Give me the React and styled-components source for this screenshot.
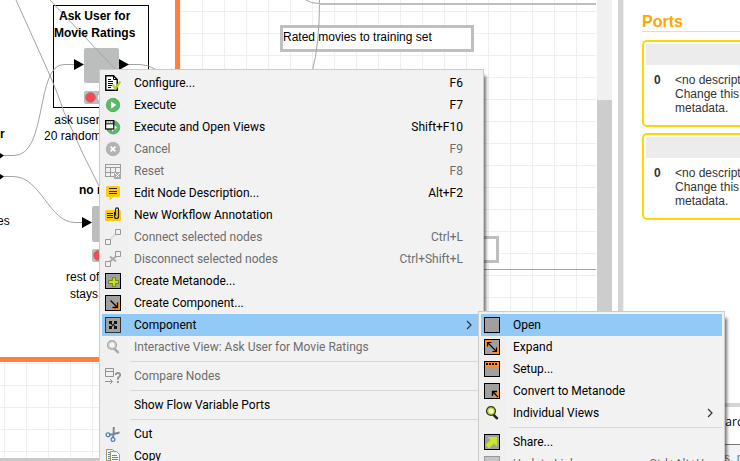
import React from 'react';
import styled, { createGlobalStyle } from 'styled-components';

const GlobalStyle = createGlobalStyle`
  * { box-sizing: border-box; }
  body { margin: 0; background: #fff; }
  button, input { font: inherit; color: inherit; }
`;

const Workbench = styled.div`
  position: relative;
  display: flex;
  height: 100vh;
  overflow: hidden;
  background: #fff;
  color: #000;
  font: 12px/16px "Liberation Sans", Arial, sans-serif;
`;

const Editor = styled.main`
  flex: 1;
  min-width: 0;
  display: flex;
  flex-direction: column;
`;

const EditorBody = styled.div`
  flex: 1;
  min-height: 0;
  display: flex;
  gap: 1px;
`;

const BottomEdge = styled.div`
  height: 3px;
  background: #c9c9c9;
`;

const Canvas = styled.div`
  position: relative;
  flex: 1;
  min-width: 0;
  overflow: hidden;
  background-color: #fff;
  background-image: linear-gradient(#efefef 1px, transparent 1px),
    linear-gradient(90deg, #efefef 1px, transparent 1px);
  background-size: 22px 22px;
  background-position: 4px 11px;
`;

const WorkflowGroup = styled.div`
  position: absolute;
  left: 0;
  top: 0;
  width: 180px;
  height: 362px;
  background: #fff;
  border: solid #ff8040;
  border-width: 0 5px 5px 0;
`;

const Annotation = styled.div`
  position: absolute;
  left: ${(p) => p.$x}px;
  top: ${(p) => p.$y}px;
  width: 194px;
  height: 27px;
  padding-top: 1px;
  background: #fff;
  border: 3px solid #bfbfbf;
`;

const Wires = styled.svg`
  position: absolute;
  left: 0;
  top: 0;
`;

const NodeLabel = styled.div`
  position: absolute;
  left: ${(p) => p.$x}px;
  top: ${(p) => p.$y}px;
  text-align: center;
  line-height: ${(p) => (p.$tight ? 16 : 17)}px;
  white-space: pre;
  font-weight: ${(p) => (p.$bold ? 700 : 400)};
`;

const ScrollTrack = styled.div`
  width: 15px;
  padding-top: 100px;
  background: #f0f0f0;
`;

const ScrollThumb = styled.div`
  height: 100%;
  background: #cdcdcd;
`;

const Sash = styled.div`
  width: 5px;
  margin-left: 6px;
  background: #d4d4d4;
`;

const SideColumn = styled.aside`
  width: 117px;
  display: flex;
  flex-direction: column;
  border-left: 1px solid #f0f0f0;
`;

const Description = styled.section`
  flex: 1;
  min-height: 0;
  overflow: hidden;
  padding: 13px 0 0 18px;
  color: #333;
`;

const PortsTitle = styled.h2`
  margin: 0 0 8px;
  height: 19px;
  border-bottom: 1px solid #ddd;
  color: #ffa500;
  font-size: 16px;
  line-height: 18px;
`;

const PortCard = styled.div`
  width: 180px;
  height: 87px;
  margin-bottom: 6px;
  padding: 2px;
  border: 2px solid #ffd700;
  border-radius: 5px;
`;

const PortHeader = styled.div`
  height: 21px;
  background: #ececec;
`;

const PortBody = styled.div`
  display: grid;
  grid-template-columns: 21px 1fr;
  padding: 8px 0 0 8px;
  line-height: 14px;
`;

const SearchView = styled.section`
  height: 58px;
  display: flex;
  flex-direction: column;
  border-top: 4px solid #d4d4d4;
`;

const SearchInput = styled.input`
  flex: 0 0 38px;
  width: 100%;
  padding: 0 0 8px 88px;
  border: 0;
  border-bottom: 1px solid #777;
  background: #fff;
  font: 12px "Open Sans", sans-serif;
`;

const SearchHint = styled.div`
  flex: 1;
  padding: 5px 0 0 100px;
  background: #f1f3f6;
  color: #777;
  white-space: nowrap;
`;

const MenuBox = styled.ul`
  position: absolute;
  left: ${(p) => p.$left};
  top: ${(p) => p.$top};
  z-index: 1;
  width: ${(p) => p.$width}px;
  margin: 0;
  padding: 2px;
  list-style: none;
  background: linear-gradient(90deg, #f0f0f0 28px, #f2f2f2 28px);
  border: 1px solid #ccc;
  box-shadow: 4px 5px 3px -2px rgba(0, 0, 0, 0.55);
  font: 12px/22px Roboto, "Noto Sans", sans-serif;
`;

const MenuItem = styled.li`
  position: relative;
`;

const MenuButton = styled.button`
  display: grid;
  grid-template-columns: 16px 1fr auto;
  align-items: center;
  width: 100%;
  height: 22px;
  padding: 0 ${(p) => (p.$submenu ? 9 : 18)}px 0 3px;
  border: 0;
  text-align: left;
  white-space: nowrap;
  background: ${(p) => (p.$active ? '#91c9f7' : 'transparent')};
  color: #000;
  &:disabled { color: #6d6d6d; }
`;

const MenuLabel = styled.span`
  padding-left: 13px;
`;

const Separator = styled.li`
  height: 7px;
  margin-left: 28px;
  padding-top: 3px;
  &::before {
    content: "";
    display: block;
    height: 1px;
    background: #d7d7d7;
  }
`;

const Icon = ({ children, crisp }) => (
  <svg width="16" height="16" viewBox="0 0 16 16" fill="none" aria-hidden="true"
    shapeRendering={crisp ? 'crispEdges' : 'auto'}>{children}</svg>
);

const Tile = ({ fill = '#a0a0a0', stroke = '#000', children }) => (
  <Icon>
    <rect x=".5" y=".5" width="15" height="15" fill={fill} stroke={stroke} />
    {children}
  </Icon>
);

const Lens = ({ ring, glass, handle, rim }) => (
  <Icon>
    <path d="M9.6 9.8l3.2 3.4" stroke={handle} strokeWidth="2.6" strokeLinecap="round" />
    <circle cx="7" cy="6" r="4.2" fill={glass} stroke={rim} strokeWidth="1.8" />
    <circle cx="7" cy="6" r="3.2" stroke={ring} strokeWidth="1.2" />
  </Icon>
);

const icons = {
  configure: (
    <Icon>
      <path d="M.8.8h7.7l3.7 3.7v10.7H.8z" fill="#fff" stroke="#000" strokeWidth="1.4" />
      <path d="M8.5.8v3.7h3.7" stroke="#000" />
      <path d="M3 4.5h3M3 6.5h5M3 8.5h5M3 10.5h4M3 12.5h3" stroke="#000" />
      <path d="M7.5 9.5l3 4 4.8-7" stroke="#b5cc2e" strokeWidth="2.2" />
    </Icon>
  ),
  execute: (
    <Icon>
      <circle cx="8" cy="8" r="6.7" fill="#5cb96a" stroke="#48a35a" strokeWidth=".8" />
      <path d="M6 4.3L11.3 8 6 11.7z" fill="#fff" />
    </Icon>
  ),
  executeViews: (
    <Icon>
      <circle cx="8.2" cy="8.4" r="6.6" fill="#5cb96a" stroke="#48a35a" strokeWidth=".8" />
      <path d="M7 4.5L12 8.4 7 12.5z" fill="#fff" />
      <rect x=".6" y="1.6" width="8.2" height="8.4" fill="#fff" stroke="#000" strokeWidth="1.2" />
      <path d="M1 4.8h7.6" stroke="#000" />
      <path d="M1.2 3.2h7.2" stroke="#555" strokeDasharray="1 1" />
    </Icon>
  ),
  cancel: (
    <Icon>
      <circle cx="8" cy="8" r="6.8" fill="#b3b3b3" stroke="#a5a5a5" strokeWidth=".6" />
      <path d="M5.6 5.6l4.8 4.8M10.4 5.6l-4.8 4.8" stroke="#fff" strokeWidth="1.7" />
    </Icon>
  ),
  reset: (
    <Icon crisp>
      <path d="M.5 1.5h15v12H.5zM.5 4.5h15M.5 9.5h15M5.5 4.5v9M10.5 4.5v9" stroke="#9a9a9a" />
      <rect x="9" y="9" width="7" height="7" fill="#aaa" />
      <path d="M10.5 10.5l4 4M14.5 10.5l-4 4" stroke="#fff" />
    </Icon>
  ),
  edit: (
    <Icon>
      <path d="M2.5 1h11Q15 1 15 2.5v8Q15 12 13.5 12H8.500l-4 3.500V12h-2Q1 12 1 10.500v-8Q1 1 2.500 1z" fill="#fcc917" />
      <path d="M4 3.500h8M4 6.500h8M4 8.500h8" stroke="#332a00" strokeWidth="1.1" />
    </Icon>
  ),
  annotate: (
    <Icon>
      <rect y="3" width="16" height="11" rx="1.500" fill="#fcc917" />
      <path d="M2 6.500h6M2 8.500h6M2 10.500h6" stroke="#332a00" strokeWidth="1.1" />
      <path d="M9.500 5v4.500q0 2 2 2t2-2v-7q0-1.700-1.500-1.700t-1.500 1.700v6" stroke="#222" strokeWidth="1.200" />
    </Icon>
  ),
  connect: (
    <Icon>
      <path d="M5 10.500L11 5" stroke="#ddd" strokeWidth="2" />
      <path d="M.5 10.500h5v5h-5zM10.500.5h5v5h-5z" stroke="#999" />
    </Icon>
  ),
  disconnect: (
    <Icon>
      <path d="M5 10.500L11 5" stroke="#ddd" strokeWidth="2" />
      <path d="M.5 10.500h5v5h-5zM10.500.5h5v5h-5z" stroke="#999" />
      <path d="M5 5.500l6 5M11 5.500l-6 5" stroke="#aaa" strokeWidth="1.800" />
    </Icon>
  ),
  metanode: (
    <Tile>
      <path d="M7.500 4.500h3v3h3v3h-3v3h-3v-3h-4v-3h4z" fill="#c5e02c" stroke="#76861b" />
    </Tile>
  ),
  createComponent: (
    <Tile>
      <path d="M15 6v9H6z" fill="#ff8c26" />
      <path d="M5.500 5.500l6.500 6.500M12.500 7.500v5h-5" stroke="#000" strokeWidth="1.300" />
    </Tile>
  ),
  component: (
    <Tile stroke="#333">
      <path d="M4 4h3v3H4zM9 4h3v3H9zM4 9h3v3H4zM9 9h3v3H9z" fill="#111" />
      <path d="M6 7.500l4 1M10 5.500l-4 5" stroke="#222" />
    </Tile>
  ),
  viewOff: <Lens ring="#c9c9c9" rim="#aaa" glass="#f7f7f7" handle="#a9a9a9" />,
  view: <Lens ring="#b4cf24" rim="#303818" glass="#f4f8d8" handle="#222" />,
  compare: (
    <Icon>
      <path d="M.5.5h8v8h-8zM.5 3.500h8" stroke="#929292" />
      <path d="M0 13.500h7M5 11l2.500 2.500L5 16" stroke="#929292" />
      <path d="M10.800 7q0-2 2.200-2t2.200 2q0 1.300-2.200 2.800v2M13 13v2" stroke="#929292" strokeWidth="1.800" />
    </Icon>
  ),
  cut: (
    <Icon>
      <path d="M8.800 1L8.500 9.500 7.500 12M14.500 6.500L8 8.200l-4 .6" stroke="#75859a" strokeWidth="1.900" />
      <circle cx="3" cy="8.800" r="1.900" stroke="#4c84b5" strokeWidth="1.300" />
      <circle cx="8" cy="13.500" r="1.900" stroke="#4c84b5" strokeWidth="1.300" />
    </Icon>
  ),
  copy: (
    <Icon>
      <path d="M1.500 1.500h6l2 2v9h-8z" fill="#eef3fa" stroke="#a89860" />
      <path d="M3 4.500h3M3 6.500h3M3 8.500h3M3 10.500h3" stroke="#5a86b8" />
      <path d="M5.500 3.500h6l3 3v9h-9z" fill="#f5f8fc" stroke="#a89860" />
      <path d="M7 7.500h5M7 9.500h6M7 11.500h6" stroke="#5a86b8" />
    </Icon>
  ),
  open: <Tile />,
  expand: (
    <Tile>
      <path d="M1 1h8L1 9zM15 15H7l8-8z" fill="#ff8c26" />
      <path d="M3.500 3.500l9 9M3.500 7.500v-4h4M12.500 8.500v4h-4" stroke="#000" strokeWidth="1.200" />
    </Tile>
  ),
  setup: (
    <Tile>
      <path d="M1 1h14v5H1z" fill="#ff8c26" />
      <path d="M2 3h12" stroke="#000" strokeWidth="2" strokeDasharray="2 1" />
    </Tile>
  ),
  convert: (
    <Tile>
      <path d="M8 15l7-8v8z" fill="#ff8c26" />
      <path d="M9 9l5 5M8.500 13V8.500H13" stroke="#000" strokeWidth="1.300" />
    </Tile>
  ),
  share: (
    <Tile>
      <path d="M3.500 3H13v9.500l-3-3L5 14.500 1.500 11 6.500 6z" fill="#c8e82c" />
    </Tile>
  ),
  update: <Tile fill="#c4c4c4" stroke="#9a9a9a" />,
};

const Chevron = () => (
  <svg width="6" height="10" viewBox="0 0 6 10" fill="none" aria-hidden="true">
    <path d="M1 1l4 4-4 4" stroke="#333" strokeWidth="1.2" />
  </svg>
);

const submenuItems = [
  { label: 'Open', icon: 'open', active: true },
  { label: 'Expand', icon: 'expand' },
  { label: 'Setup...', icon: 'setup' },
  { label: 'Convert to Metanode', icon: 'convert' },
  { label: 'Individual Views', icon: 'view', submenu: true },
  null,
  { label: 'Share...', icon: 'share' },
  { label: 'Update Link', icon: 'update', keys: 'Ctrl+Alt+U', disabled: true },
];

const menuItems = [
  { label: 'Configure...', icon: 'configure', keys: 'F6' },
  { label: 'Execute', icon: 'execute', keys: 'F7' },
  { label: 'Execute and Open Views', icon: 'executeViews', keys: 'Shift+F10' },
  { label: 'Cancel', icon: 'cancel', keys: 'F9', disabled: true },
  { label: 'Reset', icon: 'reset', keys: 'F8', disabled: true },
  { label: 'Edit Node Description...', icon: 'edit', keys: 'Alt+F2' },
  { label: 'New Workflow Annotation', icon: 'annotate' },
  { label: 'Connect selected nodes', icon: 'connect', keys: 'Ctrl+L', disabled: true },
  { label: 'Disconnect selected nodes', icon: 'disconnect', keys: 'Ctrl+Shift+L', disabled: true },
  { label: 'Create Metanode...', icon: 'metanode' },
  { label: 'Create Component...', icon: 'createComponent' },
  { label: 'Component', icon: 'component', active: true, submenu: true, items: submenuItems },
  { label: 'Interactive View: Ask User for Movie Ratings', icon: 'viewOff', disabled: true },
  null,
  { label: 'Compare Nodes', icon: 'compare', disabled: true },
  null,
  { label: 'Show Flow Variable Ports' },
  null,
  { label: 'Cut', icon: 'cut' },
  { label: 'Copy', icon: 'copy' },
];

const Menu = ({ items, left, top, width }) => (
  <MenuBox role="menu" $left={left} $top={top} $width={width}>
    {items.map((item, i) =>
      item ? (
        <MenuItem key={item.label} role="none">
          <MenuButton role="menuitem" disabled={item.disabled} $active={item.active} $submenu={item.submenu}>
            {item.icon ? icons[item.icon] : <span />}
            <MenuLabel>{item.label}</MenuLabel>
            {item.submenu ? <Chevron /> : <span>{item.keys}</span>}
          </MenuButton>
          {item.items && <Menu items={item.items} left="calc(100% - 3px)" top="-3px" width={247} />}
        </MenuItem>
      ) : (
        <Separator key={`separator-${i}`} role="separator" />
      )
    )}
  </MenuBox>
);

const Port = () => (
  <PortCard>
    <PortHeader />
    <PortBody>
      <b>0</b>
      <span>&lt;no description<br />Change this in<br />metadata.</span>
    </PortBody>
  </PortCard>
);

const WorkflowWires = () => (
  <Wires width="597" height="360" fill="none" aria-hidden="true">
    <rect x="53.5" y="5.500" width="95" height="102" stroke="#000" />
    <g fill="#bcbebd">
      <rect x="84" y="48" width="35" height="35" rx="2" />
      <rect x="84" y="91" width="35" height="13" rx="2" />
      <rect x="92" y="206" width="35" height="36" rx="2" />
      <rect x="92" y="249" width="35" height="13" rx="2" />
    </g>
    <g stroke="#888" strokeWidth=".6">
      <circle cx="90.500" cy="97.500" r="5" fill="#f54b50" />
      <circle cx="102" cy="97.500" r="5" fill="#f5f5f5" />
      <circle cx="98.500" cy="255.500" r="5" fill="#f54b50" />
    </g>
    <g stroke="#a3a3a3">
      <path d="M16 0L48 71Q58 94 64 112L83 154 100 188" />
      <path d="M50 0L116 70" />
      <path d="M4 155.500H14C48 155.500 35 64.500 64 64.500H75" />
      <path d="M128 64.500h12q8 0 16 5" />
      <path d="M4 176.500h9c28 0 36 46 62 46h8" />
      <path d="M306 0q5 3.500 13 3.500" />
      <path d="M319.500 0q0 45-7 70" />
      <path d="M484 269.500h113" />
    </g>
    <path d="M319 4h278" stroke="#bfbfbf" strokeWidth="2" />
    <path d="M74 59l10 5.500L74 70zM119 59l10 5.500-10 5.500zM82 217l10 5.500-10 5.500zM0 153l4 2.500-4 3zM0 174l4 2.500-4 3z" fill="#000" />
  </Wires>
);

export default function App() {
  return (
    <>
      <GlobalStyle />
      <Workbench>
        <Editor>
          <EditorBody>
            <Canvas>
              <WorkflowGroup />
              <Annotation $x={280} $y={25}>Rated movies to training set</Annotation>
              <Annotation $x={305} $y={236} />
              <WorkflowWires />
              <NodeLabel $x={54} $y={8} $bold>{'Ask User for\nMovie Ratings'}</NodeLabel>
              <NodeLabel $x={44} $y={112} $tight>{'ask user for\n20 random mov'}</NodeLabel>
              <NodeLabel $x={0} $y={126} $bold>r</NodeLabel>
              <NodeLabel $x={79} $y={182} $bold>no ratings</NodeLabel>
              <NodeLabel $x={-3} $y={213}>es</NodeLabel>
              <NodeLabel $x={66} $y={269}>{'rest of the\nstays for'}</NodeLabel>
            </Canvas>
            <ScrollTrack><ScrollThumb /></ScrollTrack>
          </EditorBody>
          <BottomEdge />
        </Editor>
        <Sash />
        <SideColumn>
          <Description>
            <PortsTitle>Ports</PortsTitle>
            <Port />
            <Port />
          </Description>
          <SearchView>
            <SearchInput aria-label="Search" defaultValue="Search" />
            <SearchHint>s, n</SearchHint>
          </SearchView>
        </SideColumn>
        <Menu items={menuItems} left="99px" top="69px" width={385} />
      </Workbench>
    </>
  );
}
